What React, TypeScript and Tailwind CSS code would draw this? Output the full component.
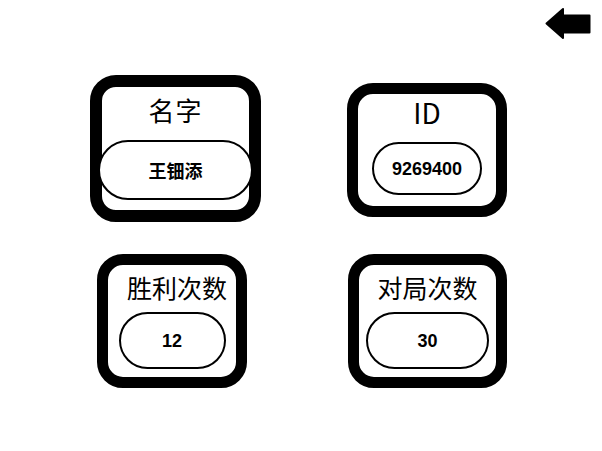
import React from 'react';

const cjk = "font-['Noto_Sans_CJK_SC',sans-serif]";
const num = "font-['Liberation_Sans','Noto_Sans_CJK_SC',sans-serif]";

const BackArrow: React.FC = () => (
  <svg width="46" height="33" viewBox="0 0 46 33" className="block">
    <polygon
      points="1.5,16.5 18,2 18,8.5 44.5,8.5 44.5,25.5 18,25.5 18,31"
      fill="#000"
      stroke="#000"
      strokeWidth="2"
      strokeLinejoin="round"
    />
  </svg>
);

const App: React.FC = () => {
  return (
    <div className="w-[602px] h-[451px] bg-white overflow-hidden">
      {/* back button */}
      <div className="flex justify-end pt-[7px] pr-[11px]">
        <button className="p-0 bg-transparent border-0">
          <BackArrow />
        </button>
      </div>

      {/* row 1 */}
      <div className="flex items-start pl-[90px] mt-[35px]">
        <div className="w-[171px] h-[147px] border-[12px] border-black rounded-[26px] flex flex-col items-center">
          <div className={`${cjk} pt-[10px] text-[26px] leading-[26px] tracking-[1px] text-black`}>名字</div>
          <div className="mt-[17px] self-stretch -mx-[4px] h-[60px] border-2 border-black rounded-full bg-white flex items-center justify-center">
            <span className={`${cjk} font-bold text-[18px] leading-none text-black`}>王钿添</span>
          </div>
        </div>

        <div className="ml-[86px] mt-[8px] w-[160px] h-[134px] border-[11px] border-black rounded-[26px] flex flex-col items-center">
          <div className={`${cjk} pt-[4px] text-[28px] leading-[28px] text-black`}>ID</div>
          <div className="mt-[16px] w-[110px] h-[53px] border-2 border-black rounded-full flex items-center justify-center">
            <span className={`${num} font-bold text-[18px] leading-none text-black`}>9269400</span>
          </div>
        </div>
      </div>

      {/* row 2 */}
      <div className="flex items-start pl-[97px] mt-[32px]">
        <div className="w-[150px] h-[134px] border-[11px] border-black rounded-[26px] flex flex-col items-center">
          <div className={`${cjk} pt-[10px] pl-[10px] text-[25px] leading-[25px] text-black`}>胜利次数</div>
          <div className="mt-[12px] w-[107px] h-[57px] border-2 border-black rounded-full flex items-center justify-center">
            <span className={`${num} font-bold text-[18px] leading-none text-black`}>12</span>
          </div>
        </div>

        <div className="ml-[101px] w-[159px] h-[134px] border-[11px] border-black rounded-[26px] flex flex-col items-center">
          <div className={`${cjk} pt-[10px] text-[25px] leading-[25px] text-black`}>对局次数</div>
          <div className="mt-[12px] w-[123px] h-[57px] border-2 border-black rounded-full flex items-center justify-center">
            <span className={`${num} font-bold text-[18px] leading-none text-black`}>30</span>
          </div>
        </div>
      </div>
    </div>
  );
};

export default App;
